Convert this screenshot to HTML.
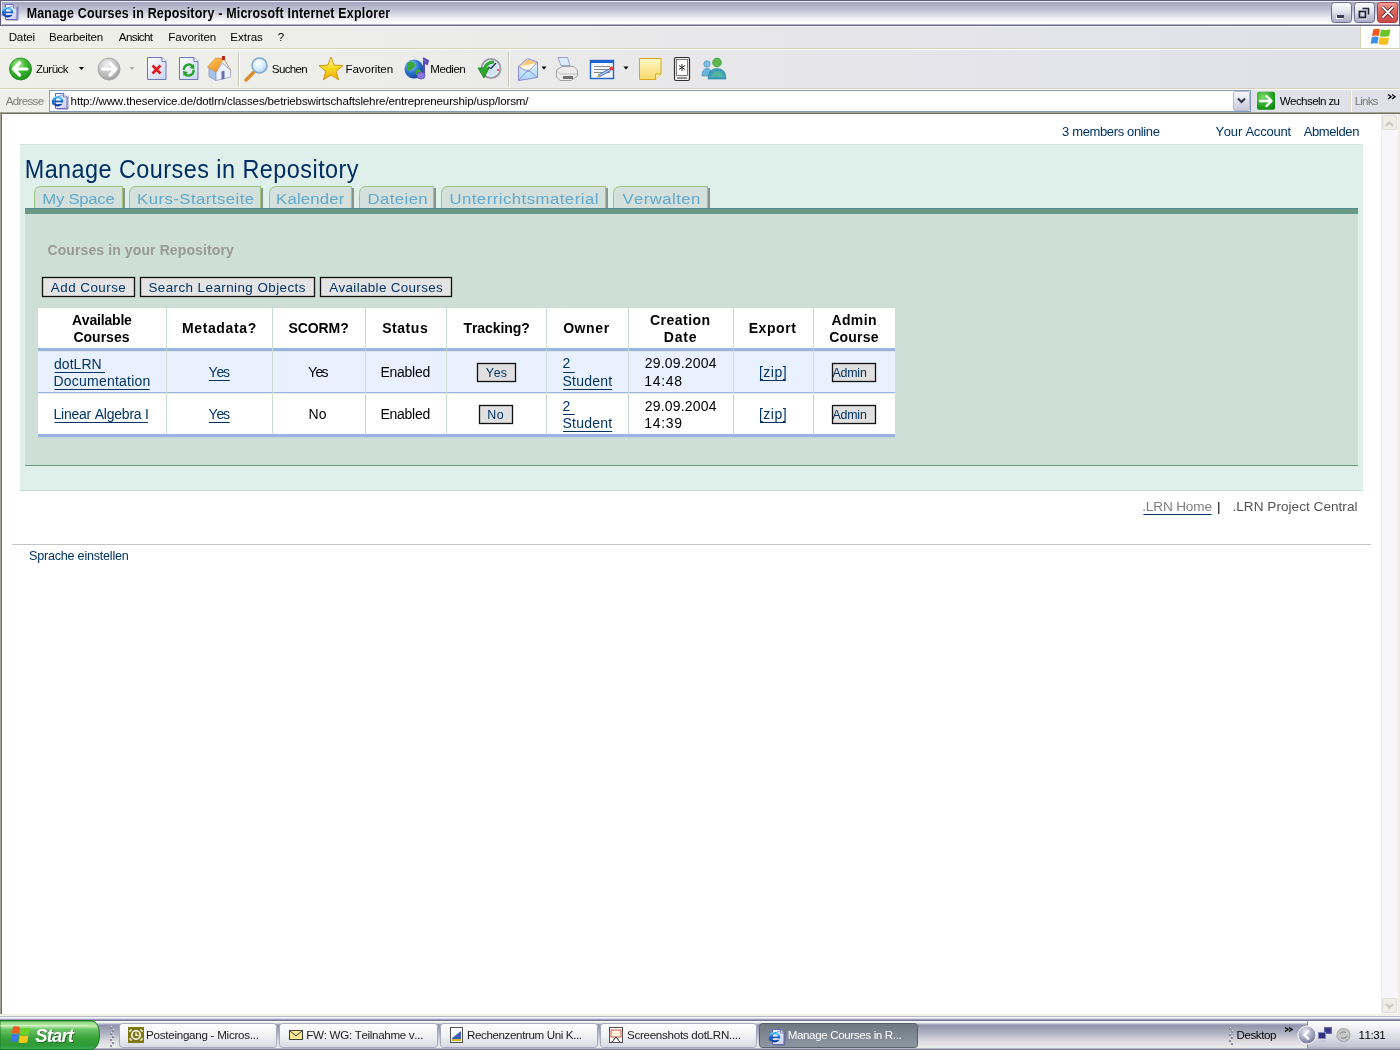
<!DOCTYPE html>
<html><head><meta charset="utf-8"><title>Manage Courses in Repository - Microsoft Internet Explorer</title>
<style>
html,body{margin:0;padding:0;width:1400px;height:1050px;overflow:hidden;background:#ffffff;}
svg{position:absolute;left:0;top:0;display:block;will-change:transform;}
text{font-family:"Liberation Sans",sans-serif;font-kerning:none;}
</style></head><body>
<svg width="1400" height="1050" viewBox="0 0 1400 1050">
<defs>
<linearGradient id="gpage" x1="0" y1="0" x2="1" y2="1"><stop offset="0" stop-color="#ffffff"/><stop offset="1" stop-color="#c8ccf4"/></linearGradient>
<linearGradient id="gie" x1="0" y1="0" x2="0" y2="1"><stop offset="0" stop-color="#5cd4fc"/><stop offset="0.5" stop-color="#1c7ce8"/><stop offset="1" stop-color="#0c3c9c"/></linearGradient>
<g id="ieicon">
<path d="M8.5 20 H20 V6.5" fill="none" stroke="#58587a" stroke-width="1" opacity="0.7"/>
<path d="M7.5 4.5 H15.5 L19 8 V19.5 H7.5 Z" fill="url(#gpage)" stroke="#6468b8" stroke-width="1"/>
<path d="M15.5 4.5 V8 H19" fill="#e8ecfc" stroke="#6468b8" stroke-width="0.8"/>
<ellipse cx="9.6" cy="12.3" rx="4.6" ry="4.1" fill="none" stroke="url(#gie)" stroke-width="2.3"/>
<rect x="5" y="11.6" width="9.5" height="1.7" fill="#0e58c0"/>
<rect x="10.2" y="13.5" width="5" height="1.2" fill="#f0f2fc"/>
<path d="M4.2 15.5 Q3.5 10 14.5 6.2" fill="none" stroke="#1a4cb0" stroke-width="0.9" stroke-dasharray="1.2 0.8"/>
</g>
<linearGradient id="tbtn" x1="0" y1="0" x2="0" y2="1">
<stop offset="0" stop-color="#fdfdff"/><stop offset="0.45" stop-color="#e4e4ee"/><stop offset="1" stop-color="#a8a8c2"/></linearGradient>
<linearGradient id="tbtnr" x1="0" y1="0" x2="0" y2="1">
<stop offset="0" stop-color="#f0a8a0"/><stop offset="0.35" stop-color="#e06a64"/><stop offset="1" stop-color="#c84848"/></linearGradient>
<linearGradient id="rebar" x1="0" y1="0" x2="1400" y2="0" gradientUnits="userSpaceOnUse">
<stop offset="0" stop-color="#f0f0ea"/><stop offset="0.35" stop-color="#ebebea"/><stop offset="0.7" stop-color="#e4e4ea"/><stop offset="1" stop-color="#e0e0e9"/></linearGradient>
<radialGradient id="gback" cx="0.4" cy="0.3" r="0.8">
<stop offset="0" stop-color="#b8f0a0"/><stop offset="0.45" stop-color="#3cb830"/><stop offset="1" stop-color="#178a1a"/></radialGradient>
<radialGradient id="gfwd" cx="0.4" cy="0.3" r="0.8">
<stop offset="0" stop-color="#f0f0f0"/><stop offset="0.5" stop-color="#c4c4c4"/><stop offset="1" stop-color="#9a9a9a"/></radialGradient>
<linearGradient id="gdoc" x1="0" y1="0" x2="1" y2="1">
<stop offset="0" stop-color="#ffffff"/><stop offset="1" stop-color="#c8d4f0"/></linearGradient>
<radialGradient id="glens" cx="0.4" cy="0.35" r="0.7">
<stop offset="0" stop-color="#ffffff"/><stop offset="0.6" stop-color="#d4ecfa"/><stop offset="1" stop-color="#a0c8e8"/></radialGradient>
<linearGradient id="gstar" x1="0" y1="0" x2="0" y2="1">
<stop offset="0" stop-color="#fff8b0"/><stop offset="0.5" stop-color="#fad81c"/><stop offset="1" stop-color="#e8a808"/></linearGradient>
<radialGradient id="gglobe" cx="0.35" cy="0.3" r="0.8">
<stop offset="0" stop-color="#9adcf8"/><stop offset="0.5" stop-color="#2a74d0"/><stop offset="1" stop-color="#123c90"/></radialGradient>
<linearGradient id="gnote" x1="0" y1="0" x2="0" y2="1">
<stop offset="0" stop-color="#fff8c8"/><stop offset="1" stop-color="#f8d868"/></linearGradient>
<radialGradient id="ggo" cx="0.35" cy="0.3" r="0.9">
<stop offset="0" stop-color="#7ede70"/><stop offset="0.6" stop-color="#20a020"/><stop offset="1" stop-color="#0c7a10"/></radialGradient>
<linearGradient id="groof" x1="0" y1="0" x2="1" y2="1"><stop offset="0" stop-color="#fcc860"/><stop offset="1" stop-color="#f08a18"/></linearGradient>
<linearGradient id="genv" x1="0" y1="0" x2="0" y2="1"><stop offset="0" stop-color="#e4f4fc"/><stop offset="1" stop-color="#a8d8f8"/></linearGradient><linearGradient id="gflap" x1="0" y1="0" x2="0" y2="1"><stop offset="0" stop-color="#f8b860"/><stop offset="1" stop-color="#fce8b0"/></linearGradient>
<linearGradient id="gdd" x1="0" y1="0" x2="0" y2="1">
<stop offset="0" stop-color="#f8f8fc"/><stop offset="1" stop-color="#c8c8da"/></linearGradient>
<linearGradient id="gtray" x1="0" y1="0" x2="0" y2="1">
<stop offset="0" stop-color="#ffffff"/><stop offset="0.15" stop-color="#f6f6fa"/><stop offset="0.6" stop-color="#dcdce6"/><stop offset="0.9" stop-color="#c4c4d4"/><stop offset="1" stop-color="#a8a8bc"/></linearGradient>
<linearGradient id="gstart" x1="0" y1="0" x2="0" y2="1">
<stop offset="0" stop-color="#3c9c3c"/><stop offset="0.08" stop-color="#9ce08c"/><stop offset="0.2" stop-color="#bcecae"/><stop offset="0.3" stop-color="#6cc468"/>
<stop offset="0.6" stop-color="#3aa43c"/><stop offset="0.85" stop-color="#2e9a36"/><stop offset="1" stop-color="#3aae5a"/></linearGradient>
<linearGradient id="ggrip" x1="0" y1="0" x2="1" y2="0">
<stop offset="0" stop-color="#a0a0b8"/><stop offset="0.5" stop-color="#c8c8d8"/><stop offset="1" stop-color="#b4b4c8"/></linearGradient>
<linearGradient id="gtask" x1="0" y1="0" x2="0" y2="1">
<stop offset="0" stop-color="#ffffff"/><stop offset="0.5" stop-color="#f2f2f6"/><stop offset="1" stop-color="#d8d8e4"/></linearGradient>
<linearGradient id="gtaska" x1="0" y1="0" x2="0" y2="1">
<stop offset="0" stop-color="#6e7882"/><stop offset="1" stop-color="#8e98a2"/></linearGradient>
<radialGradient id="gchev" cx="0.4" cy="0.3" r="0.8">
<stop offset="0" stop-color="#e8e8f4"/><stop offset="0.6" stop-color="#9a9ab8"/><stop offset="1" stop-color="#6a6a90"/></radialGradient>
</defs>
<rect x="0" y="0" width="1400" height="1" fill="#5e5d7c" />
<rect x="0" y="1" width="1400" height="1" fill="#eeeef6" />
<rect x="0" y="2" width="1400" height="1" fill="#a9a9c3" />
<rect x="0" y="3" width="1400" height="1" fill="#abaac5" />
<rect x="0" y="4" width="1400" height="1" fill="#aeaec7" />
<rect x="0" y="5" width="1400" height="1" fill="#b1b1c9" />
<rect x="0" y="6" width="1400" height="1" fill="#b4b4cb" />
<rect x="0" y="7" width="1400" height="1" fill="#b8b8ce" />
<rect x="0" y="8" width="1400" height="1" fill="#bcbcd1" />
<rect x="0" y="9" width="1400" height="1" fill="#c0c0d4" />
<rect x="0" y="10" width="1400" height="1" fill="#c4c5d7" />
<rect x="0" y="11" width="1400" height="1" fill="#c9c9da" />
<rect x="0" y="12" width="1400" height="1" fill="#cdcedd" />
<rect x="0" y="13" width="1400" height="1" fill="#d3d3e1" />
<rect x="0" y="14" width="1400" height="1" fill="#d9d9e5" />
<rect x="0" y="15" width="1400" height="1" fill="#dfdfe9" />
<rect x="0" y="16" width="1400" height="1" fill="#e5e5ed" />
<rect x="0" y="17" width="1400" height="1" fill="#eaeaf1" />
<rect x="0" y="18" width="1400" height="1" fill="#eeeef4" />
<rect x="0" y="19" width="1400" height="1" fill="#f2f2f6" />
<rect x="0" y="20" width="1400" height="1" fill="#f5f5f8" />
<rect x="0" y="21" width="1400" height="1" fill="#f9f9fb" />
<rect x="0" y="22" width="1400" height="1" fill="#ffffff" />
<rect x="0" y="23" width="1400" height="1" fill="#fbfbfd" />
<rect x="0" y="24" width="1400" height="1" fill="#b4b4c6" />
<rect x="0" y="25" width="1400" height="1" fill="#6c6b8a" />
<rect x="0" y="0" width="1" height="26" fill="#5e5d7c" />
<rect x="1" y="1" width="1" height="24" fill="#eeeef6" />
<rect x="1399" y="0" width="1" height="26" fill="#5e5d7c" />
<use href="#ieicon" transform="translate(-2,0)"/>
<g transform="translate(1,1)">
<text x="26.55" y="18" font-size="14.2" fill="#e4e4ee" font-weight="bold" font-style="normal" textLength="413.10" lengthAdjust="spacing" transform="translate(27.50,0) scale(0.88,1) translate(-27.50,0)" >Manage Courses in Repository - Microsoft Internet Explorer</text>
</g>
<text x="26.55" y="18" font-size="14.2" fill="#000" font-weight="bold" font-style="normal" textLength="413.10" lengthAdjust="spacing" transform="translate(27.50,0) scale(0.88,1) translate(-27.50,0)" >Manage Courses in Repository - Microsoft Internet Explorer</text>
<rect x="1331.5" y="2.5" width="20" height="20" rx="3" ry="3" fill="url(#tbtn)" stroke="#6e6d8e" stroke-width="1"/>
<rect x="1354.5" y="2.5" width="20" height="20" rx="3" ry="3" fill="url(#tbtn)" stroke="#6e6d8e" stroke-width="1"/>
<rect x="1336" y="16" width="7" height="3" fill="#ffffff" />
<rect x="1337" y="15" width="7" height="3" fill="#3c3b5c" />
<path d="M1362.5 8.5 H1368.5 V14.5" fill="none" stroke="#22223a" stroke-width="1.6"/>
<rect x="1359.5" y="11.5" width="6" height="6" fill="none" stroke="#ffffff" stroke-width="2" transform="translate(0.5,0.8)"/>
<rect x="1359.5" y="11.5" width="6" height="6" fill="none" stroke="#22223a" stroke-width="1.8"/>
<rect x="1377.5" y="2.5" width="20" height="20" rx="3" ry="3" fill="url(#tbtnr)" stroke="#b03c40" stroke-width="1"/>
<path d="M1382.5 7 L1393 17.5 M1393 7 L1382.5 17.5" stroke="#40181a" stroke-width="3.2"/>
<path d="M1382.5 7 L1393 17.5 M1393 7 L1382.5 17.5" stroke="#ffffff" stroke-width="1.8"/>
<rect x="0" y="26" width="1400" height="88" fill="url(#rebar)" />
<rect x="1" y="26" width="1360" height="1" fill="#f4f4f6" />
<rect x="0" y="48" width="1400" height="1" fill="#d6d0b8" />
<rect x="0" y="49" width="1400" height="1" fill="#ffffff" />
<rect x="0" y="88" width="1400" height="1" fill="#d6d0b8" />
<rect x="0" y="89" width="1400" height="1" fill="#ffffff" />
<rect x="1361" y="26" width="38" height="22" fill="#ffffff" />
<rect x="1360" y="26" width="1" height="23" fill="#d6d0b8" />
<g transform="translate(1371,28)">
<path d="M2.2 1.5 Q5 0 9 1.2 L7.8 8 Q4.5 6.8 1 8.2 Z" fill="#f05a1e"/>
<path d="M10 1.5 Q14 2.6 19.5 1.2 L18.2 8.3 Q13 9.3 8.8 8.2 Z" fill="#6cc428"/>
<path d="M0.8 9.2 Q4.3 8 7.6 9 L6.4 15.8 Q3 14.6 -0.4 16 Z" fill="#3c90e8"/>
<path d="M8.6 9.3 Q13 10.3 18 9.4 L16.8 16.5 Q11.5 17.4 7.4 16 Z" fill="#f8c01c"/>
</g>
<text x="8.65" y="41" font-size="11.6" fill="#000" font-weight="normal" font-style="normal" textLength="26.43" lengthAdjust="spacing" >Datei</text>
<text x="49.05" y="41" font-size="11.6" fill="#000" font-weight="normal" font-style="normal" textLength="54.20" lengthAdjust="spacing" >Bearbeiten</text>
<text x="118.78" y="41" font-size="11.6" fill="#000" font-weight="normal" font-style="normal" textLength="34.31" lengthAdjust="spacing" >Ansicht</text>
<text x="168.25" y="41" font-size="11.6" fill="#000" font-weight="normal" font-style="normal" textLength="48.00" lengthAdjust="spacing" >Favoriten</text>
<text x="230.25" y="41" font-size="11.6" fill="#000" font-weight="normal" font-style="normal" textLength="32.67" lengthAdjust="spacing" >Extras</text>
<text x="277.72" y="41" font-size="11.6" fill="#000" font-weight="normal" font-style="normal" textLength="6.01" lengthAdjust="spacing" >?</text>
<circle cx="20.5" cy="69" r="11" fill="url(#gback)" stroke="#1d8a1e" stroke-width="0.8"/>
<path d="M13.5 69 L19.5 63 M13.5 69 L19.5 75 M13.5 69 H27" stroke="#ffffff" stroke-width="3.2" stroke-linecap="round" stroke-linejoin="round" fill="none"/>
<text x="35.93" y="73" font-size="11.6" fill="#000" font-weight="normal" font-style="normal" textLength="32.65" lengthAdjust="spacing" >Zurück</text>
<path d="M79 67 H84 L81.5 70 Z" fill="#000"/>
<circle cx="109" cy="69" r="11" fill="url(#gfwd)" stroke="#a0a0a0" stroke-width="0.8"/>
<path d="M116 69 L110 63 M116 69 L110 75 M116 69 H102.5" stroke="#ffffff" stroke-width="3.2" stroke-linecap="round" stroke-linejoin="round" fill="none"/>
<path d="M129.5 67 H134.5 L132 70 Z" fill="#a8a8a8"/>
<path d="M147.5 57.5 H162 L166 61.5 V79.5 H147.5 Z" fill="url(#gdoc)" stroke="#6a7ab8" stroke-width="1"/>
<path d="M162 57.5 V61.5 H166" fill="#ffffff" stroke="#6a7ab8" stroke-width="1"/>
<path d="M152.5 65.5 L160.5 73.5 M160.5 65.5 L152.5 73.5" stroke="#e01818" stroke-width="2.6"/>
<path d="M179.5 57.5 H194 L198 61.5 V79.5 H179.5 Z" fill="url(#gdoc)" stroke="#6a7ab8" stroke-width="1"/>
<path d="M194 57.5 V61.5 H198" fill="#ffffff" stroke="#6a7ab8" stroke-width="1"/>
<path d="M184 70 A5 5 0 0 1 193 66.5" fill="none" stroke="#20a428" stroke-width="2.4"/>
<path d="M194 64 L194.5 69 L189.5 68 Z" fill="#20a428"/>
<path d="M193.5 70 A5 5 0 0 1 184.5 73.5" fill="none" stroke="#20a428" stroke-width="2.4"/>
<path d="M183.5 76 L183 71 L188 72 Z" fill="#20a428"/>
<path d="M209 67 L216 72 L216 80.5 L209 76.5 Z" fill="#a4c4ec" stroke="#8a9cc8" stroke-width="0.8"/>
<path d="M216 72 L222.5 63 L230.5 70.5 L230.5 77 L216 80.5 Z" fill="#eef2fc" stroke="#8a9cc8" stroke-width="0.8"/>
<path d="M207.5 67 L215.5 58 L223.5 58.5 L216 72 Z" fill="url(#groof)" stroke="#e08828" stroke-width="0.6"/>
<path d="M223.5 58.5 L231 70.5" stroke="#c89870" stroke-width="1"/>
<path d="M221.5 71.5 L224.5 70.5 L224.5 79 L221.5 79.6 Z" fill="#6870a8"/>
<rect x="222" y="56" width="3" height="4" fill="#b82818" />
<rect x="238" y="52" width="1" height="35" fill="#c8c6b8" />
<rect x="239" y="52" width="1" height="35" fill="#ffffff" />
<path d="M246 80 L253.5 72.5" stroke="#e08a30" stroke-width="3.4" stroke-linecap="round"/>
<circle cx="259.5" cy="65.5" r="7.5" fill="url(#glens)" stroke="#7ea6d0" stroke-width="1.6"/>
<text x="271.87" y="73" font-size="11.6" fill="#000" font-weight="normal" font-style="normal" textLength="35.88" lengthAdjust="spacing" >Suchen</text>
<path d="M331 57 L334.2 65.2 L343 65.6 L336.2 71.2 L338.6 79.8 L331 75 L323.4 79.8 L325.8 71.2 L319 65.6 L327.8 65.2 Z" fill="url(#gstar)" stroke="#d09810" stroke-width="1" stroke-linejoin="round"/>
<text x="345.45" y="73" font-size="11.6" fill="#000" font-weight="normal" font-style="normal" textLength="47.70" lengthAdjust="spacing" >Favoriten</text>
<circle cx="414" cy="69" r="9.5" fill="url(#gglobe)"/>
<path d="M407 63 Q411 60 414 63 Q417 66 412 69 Q409 72 407 70 Z M416 70 Q420 68 422 72 Q419 76 416 75 Z" fill="#3ca838"/>
<path d="M423 58 L428 61 L427 64 L424 62 V75" fill="#7a6ad0" stroke="#5a4ab8" stroke-width="2"/>
<ellipse cx="421" cy="75.5" rx="4" ry="3.5" fill="#8878e0" stroke="#5a4ab8" stroke-width="0.8"/>
<text x="430.35" y="73" font-size="11.6" fill="#000" font-weight="normal" font-style="normal" textLength="35.40" lengthAdjust="spacing" >Medien</text>
<circle cx="491" cy="68.5" r="9.5" fill="#e8f0f8" stroke="#9c9ca4" stroke-width="2"/>
<circle cx="491" cy="68.5" r="7" fill="#cfe3f4"/>
<path d="M491 68.5 L496 63 M491 68.5 L488 67" stroke="#20304a" stroke-width="1.2"/>
<circle cx="498" cy="70" r="1" fill="#e03030"/>
<path d="M478 68 L484 78 L489 68 Z" fill="#2ca82c" stroke="#108010" stroke-width="0.8"/>
<path d="M484 70 Q486 62 494 62" fill="none" stroke="#2ca82c" stroke-width="3"/>
<rect x="508" y="52" width="1" height="35" fill="#c8c6b8" />
<rect x="509" y="52" width="1" height="35" fill="#ffffff" />
<path d="M518.5 66.5 L527.5 58.5 L537.5 62 V77.5 L518.5 80.5 Z" fill="url(#genv)" stroke="#8c88d8" stroke-width="1"/>
<path d="M520 66 L527.5 59.5 L536.5 62.5 L536 66 L528 70 L521 68.5 Z" fill="url(#gflap)"/>
<path d="M521.5 66 L535.5 63.5 L535.5 67 L528 69 L522 68.5 Z" fill="#fffaf0"/>
<path d="M518.5 80.5 L528 70 L537.5 77.5 M518.5 66.5 L528 72 L537.5 62" fill="none" stroke="#8c88d8" stroke-width="0.9"/>
<path d="M541.5 66.5 H546.5 L544 69.5 Z" fill="#000"/>
<path d="M558 57.5 H567.5 L570 65.5 H561 Z" fill="#dcecfc" stroke="#8a90c8" stroke-width="0.8"/>
<path d="M556.5 70 L562 66.5 H574 L577.5 70 V76 L571 80.5 H560 L556.5 77 Z" fill="#ececec" stroke="#9a9a9a" stroke-width="0.9"/>
<path d="M556.5 70.5 L560.5 74 H577" fill="none" stroke="#b4b4b4" stroke-width="0.8"/>
<rect x="563" y="76" width="10" height="3" fill="#707070" />
<rect x="590.5" y="60.5" width="23" height="18" fill="#f4f8fe" stroke="#1c64d0" stroke-width="1.4"/>
<rect x="591" y="61" width="22" height="2" fill="#1c64d0" />
<rect x="594" y="66" width="16" height="1" fill="#8c8c8c" />
<rect x="594" y="69" width="16" height="1" fill="#8c8c8c" />
<rect x="594" y="72" width="16" height="1" fill="#8c8c8c" />
<path d="M598.5 76 L610.5 69.5" stroke="#3a72d8" stroke-width="2.8"/>
<path d="M598.5 76 L610.5 69.5" stroke="#f4f8ff" stroke-width="0.9"/>
<path d="M596.5 77.2 L599.5 74 L600.5 76.5 Z" fill="#e0a030"/>
<circle cx="611.5" cy="68.5" r="1.9" fill="#e04030"/>
<path d="M623.5 66.5 H628.5 L626 69.5 Z" fill="#000"/>
<path d="M639.5 58.5 H661 V74 L655.5 79.5 H639.5 Z" fill="url(#gnote)" stroke="#d8a820" stroke-width="1"/>
<path d="M655.5 79.5 V74 H661" fill="#fff0b0" stroke="#d8a820" stroke-width="1"/>
<rect x="674.5" y="57.5" width="15" height="23" rx="1.5" fill="#f0f0f0" stroke="#303030" stroke-width="1.2"/>
<rect x="677" y="60" width="10" height="15" fill="#ffffff" />
<rect x="676.5" y="59.5" width="11" height="16" fill="none" stroke="#606060" stroke-width="0.8"/>
<path d="M682 64 V71 M679 65.5 L685 69.5 M685 65.5 L679 69.5" stroke="#303030" stroke-width="1"/>
<rect x="677" y="77" width="10" height="2" fill="#909090" />
<circle cx="707" cy="64" r="3.2" fill="#7cc0e0" stroke="#3a88b8" stroke-width="0.6"/><path d="M702 76 Q702 68.5 707 68.5 Q712 68.5 712 76 Z" fill="#6ab4dc" stroke="#3a88b8" stroke-width="0.6"/>
<circle cx="717" cy="62.5" r="4.4" fill="#5cb84a" stroke="#2e8a3a" stroke-width="0.6"/><path d="M708 79 Q708 68.5 717 68.5 Q726 68.5 726 79 Z" fill="#3aa0c0" stroke="#2a7890" stroke-width="0.6"/>
<path d="M711 77 Q713 71 717 71 Q722 71 724 77 Z" fill="#60b890" opacity="0.7"/>
<text x="5.68" y="105" font-size="11.6" fill="#7c7c74" font-weight="normal" font-style="normal" textLength="38.44" lengthAdjust="spacing" >Adresse</text>
<rect x="49.5" y="90.5" width="1201" height="21" fill="#ffffff" stroke="#7f9db9" stroke-width="1"/>
<use href="#ieicon" transform="translate(48,89)"/>
<text x="70.60" y="105" font-size="11.6" fill="#000" font-weight="normal" font-style="normal" textLength="457.90" lengthAdjust="spacing" >http://www.theservice.de/dotlrn/classes/betriebswirtschaftslehre/entrepreneurship/usp/lorsm/</text>
<rect x="1233.5" y="91.5" width="16" height="19" rx="1.5" fill="url(#gdd)" stroke="#b8bcd0" stroke-width="1"/>
<path d="M1238 98.5 L1241.5 102 L1245 98.5" fill="none" stroke="#303040" stroke-width="2"/>
<rect x="1257" y="91.8" width="18" height="18" rx="2" fill="url(#ggo)"/>
<path d="M1260 101 H1271 M1266.5 96 L1271.5 101 L1266.5 106" stroke="#ffffff" stroke-width="2.4" fill="none" stroke-linecap="round" stroke-linejoin="round"/>
<text x="1279.75" y="105" font-size="11.6" fill="#000" font-weight="normal" font-style="normal" textLength="60.32" lengthAdjust="spacing" >Wechseln zu</text>
<rect x="1350" y="90" width="1" height="22" fill="#d8d4c0" />
<rect x="1351" y="90" width="1" height="22" fill="#ffffff" />
<text x="1354.65" y="105" font-size="11.6" fill="#7c7c74" font-weight="normal" font-style="normal" textLength="23.77" lengthAdjust="spacing" >Links</text>
<path d="M1388 94.5 L1391 96.8 L1388 99 M1392 94.5 L1395 96.8 L1392 99" fill="none" stroke="#000" stroke-width="1.3"/>
<rect x="0" y="112" width="1400" height="1" fill="#a5a293" />
<rect x="0" y="113" width="1400" height="1" fill="#716f64" />
<rect x="0" y="112" width="1" height="903" fill="#a5a293" />
<rect x="1" y="113" width="1" height="902" fill="#716f64" />
<rect x="2" y="114" width="1380" height="900" fill="#ffffff" />
<rect x="1381" y="114" width="17" height="900" fill="#f7f7fb" />
<rect x="1381" y="114" width="1" height="900" fill="#ebebf0" />
<rect x="1398" y="114" width="2" height="900" fill="#eeeee4" />
<rect x="1382.5" y="115.5" width="14" height="14" rx="1.5" fill="#eeeee6" stroke="#e0e0d8" stroke-width="1"/>
<rect x="1382.5" y="998.5" width="14" height="14" rx="1.5" fill="#eeeee6" stroke="#e0e0d8" stroke-width="1"/>
<path d="M1386 126 L1389.5 122.5 L1393 126" fill="none" stroke="#c9c9c2" stroke-width="2"/>
<path d="M1386 1004 L1389.5 1007.5 L1393 1004" fill="none" stroke="#c9c9c2" stroke-width="2"/>
<text x="1062.10" y="136" font-size="13" fill="#003366" font-weight="normal" font-style="normal" textLength="97.77" lengthAdjust="spacing" >3 members online</text>
<text x="1215.41" y="136" font-size="13" fill="#003366" font-weight="normal" font-style="normal" textLength="75.68" lengthAdjust="spacing" >Your Account</text>
<text x="1303.67" y="136" font-size="13" fill="#003366" font-weight="normal" font-style="normal" textLength="55.77" lengthAdjust="spacing" >Abmelden</text>
<rect x="20" y="144" width="1343" height="347" fill="#dff0eb" />
<rect x="20" y="144" width="1343" height="1" fill="#d2e6de" />
<rect x="20" y="490" width="1343" height="1" fill="#c9dbd2" />
<text x="24.47" y="178" font-size="26" fill="#002d62" font-weight="normal" font-style="normal" textLength="370.96" lengthAdjust="spacing" transform="translate(26.60,0) scale(0.9,1) translate(-26.60,0)" >Manage Courses in Repository</text>
<rect x="123" y="188" width="2" height="21" fill="#8a948a" />
<path d="M34.5 208.5 V193.5 Q34.5 186.5 41.5 186.5 H122.5 V208.5" fill="#d4e0dc" stroke="#9cc47c" stroke-width="1"/>
<text x="42.43" y="204" font-size="15.5" fill="#62a8cc" font-weight="normal" font-style="normal" textLength="67.05" lengthAdjust="spacing" transform="translate(43.70,0) scale(1.08,1) translate(-43.70,0)" >My Space</text>
<rect x="261" y="188" width="2" height="21" fill="#8a948a" />
<path d="M129.5 208.5 V193.5 Q129.5 186.5 136.5 186.5 H260.5 V208.5" fill="#d4e0dc" stroke="#9cc47c" stroke-width="1"/>
<text x="137.13" y="204" font-size="15.5" fill="#62a8cc" font-weight="normal" font-style="normal" textLength="108.35" lengthAdjust="spacing" transform="translate(138.40,0) scale(1.08,1) translate(-138.40,0)" >Kurs-Startseite</text>
<rect x="352" y="188" width="2" height="21" fill="#8a948a" />
<path d="M269.5 208.5 V193.5 Q269.5 186.5 276.5 186.5 H351.5 V208.5" fill="#d4e0dc" stroke="#9cc47c" stroke-width="1"/>
<text x="276.23" y="204" font-size="15.5" fill="#62a8cc" font-weight="normal" font-style="normal" textLength="63.10" lengthAdjust="spacing" transform="translate(277.50,0) scale(1.08,1) translate(-277.50,0)" >Kalender</text>
<rect x="434" y="188" width="2" height="21" fill="#8a948a" />
<path d="M359.5 208.5 V193.5 Q359.5 186.5 366.5 186.5 H433.5 V208.5" fill="#d4e0dc" stroke="#9cc47c" stroke-width="1"/>
<text x="367.53" y="204" font-size="15.5" fill="#62a8cc" font-weight="normal" font-style="normal" textLength="55.80" lengthAdjust="spacing" transform="translate(368.80,0) scale(1.08,1) translate(-368.80,0)" >Dateien</text>
<rect x="606" y="188" width="2" height="21" fill="#8a948a" />
<path d="M441.5 208.5 V193.5 Q441.5 186.5 448.5 186.5 H605.5 V208.5" fill="#d4e0dc" stroke="#9cc47c" stroke-width="1"/>
<text x="449.50" y="204" font-size="15.5" fill="#62a8cc" font-weight="normal" font-style="normal" textLength="137.97" lengthAdjust="spacing" transform="translate(450.70,0) scale(1.08,1) translate(-450.70,0)" >Unterrichtsmaterial</text>
<rect x="708" y="188" width="2" height="21" fill="#8a948a" />
<path d="M613.5 208.5 V193.5 Q613.5 186.5 620.5 186.5 H707.5 V208.5" fill="#d4e0dc" stroke="#9cc47c" stroke-width="1"/>
<text x="622.43" y="204" font-size="15.5" fill="#62a8cc" font-weight="normal" font-style="normal" textLength="72.09" lengthAdjust="spacing" transform="translate(622.50,0) scale(1.08,1) translate(-622.50,0)" >Verwalten</text>
<rect x="25" y="208" width="1333" height="6" fill="#6b9a84" />
<rect x="25" y="208" width="1333" height="1" fill="#4f8e92" />
<rect x="25" y="214" width="1333" height="252" fill="#cddfd7" />
<rect x="25" y="465" width="1333" height="1" fill="#6b9a84" />
<text x="47.43" y="255" font-size="14" fill="#999999" font-weight="bold" font-style="normal" textLength="186.35" lengthAdjust="spacing" >Courses in your Repository</text>
<rect x="42.5" y="277.5" width="92" height="19" fill="#e4e4e4" stroke="#111111" stroke-width="1.3"/>
<text x="50.87" y="292" font-size="13.4" fill="#003366" font-weight="normal" font-style="normal" textLength="74.92" lengthAdjust="spacing" >Add Course</text>
<rect x="140.5" y="277.5" width="174" height="19" fill="#e4e4e4" stroke="#111111" stroke-width="1.3"/>
<text x="148.39" y="292" font-size="13.4" fill="#003366" font-weight="normal" font-style="normal" textLength="157.09" lengthAdjust="spacing" >Search Learning Objects</text>
<rect x="320.5" y="277.5" width="131" height="19" fill="#e4e4e4" stroke="#111111" stroke-width="1.3"/>
<text x="329.27" y="292" font-size="13.4" fill="#003366" font-weight="normal" font-style="normal" textLength="113.41" lengthAdjust="spacing" >Available Courses</text>
<rect x="38" y="308" width="857" height="40" fill="#ffffff" />
<rect x="38" y="348" width="857" height="3" fill="#98b4e4" />
<rect x="38" y="351" width="857" height="41" fill="#e9f1fe" />
<rect x="38" y="351" width="857" height="1" fill="#dce8e0" />
<rect x="38" y="392" width="857" height="1" fill="#98b4e4" />
<rect x="38" y="393" width="857" height="41" fill="#ffffff" />
<rect x="38" y="393" width="857" height="1" fill="#e4ece4" />
<rect x="38" y="434" width="857" height="3" fill="#98b4e4" />
<rect x="38" y="437" width="857" height="1" fill="#c4d8cc" />
<rect x="166" y="308" width="1" height="126" fill="#c8dcd4" />
<rect x="272" y="308" width="1" height="126" fill="#c8dcd4" />
<rect x="365" y="308" width="1" height="126" fill="#c8dcd4" />
<rect x="446" y="308" width="1" height="126" fill="#c8dcd4" />
<rect x="546" y="308" width="1" height="126" fill="#c8dcd4" />
<rect x="628" y="308" width="1" height="126" fill="#c8dcd4" />
<rect x="733" y="308" width="1" height="126" fill="#c8dcd4" />
<rect x="813" y="308" width="1" height="126" fill="#c8dcd4" />
<text x="71.95" y="325" font-size="14" fill="#000" font-weight="bold" font-style="normal" textLength="59.93" lengthAdjust="spacing" >Available</text>
<text x="73.43" y="341.5" font-size="14" fill="#000" font-weight="bold" font-style="normal" textLength="56.05" lengthAdjust="spacing" >Courses</text>
<text x="181.96" y="333" font-size="14" fill="#000" font-weight="bold" font-style="normal" textLength="74.24" lengthAdjust="spacing" >Metadata?</text>
<text x="288.50" y="333" font-size="14" fill="#000" font-weight="bold" font-style="normal" textLength="60.21" lengthAdjust="spacing" >SCORM?</text>
<text x="382.20" y="333" font-size="14" fill="#000" font-weight="bold" font-style="normal" textLength="45.48" lengthAdjust="spacing" >Status</text>
<text x="463.44" y="333" font-size="14" fill="#000" font-weight="bold" font-style="normal" textLength="66.26" lengthAdjust="spacing" >Tracking?</text>
<text x="563.13" y="333" font-size="14" fill="#000" font-weight="bold" font-style="normal" textLength="45.99" lengthAdjust="spacing" >Owner</text>
<text x="650.03" y="325" font-size="14" fill="#000" font-weight="bold" font-style="normal" textLength="60.04" lengthAdjust="spacing" >Creation</text>
<text x="663.76" y="341.5" font-size="14" fill="#000" font-weight="bold" font-style="normal" textLength="32.82" lengthAdjust="spacing" >Date</text>
<text x="748.66" y="333" font-size="14" fill="#000" font-weight="bold" font-style="normal" textLength="47.31" lengthAdjust="spacing" >Export</text>
<text x="831.45" y="325" font-size="14" fill="#000" font-weight="bold" font-style="normal" textLength="45.02" lengthAdjust="spacing" >Admin</text>
<text x="829.23" y="341.5" font-size="14" fill="#000" font-weight="bold" font-style="normal" textLength="49.35" lengthAdjust="spacing" >Course</text>
<text x="54.01" y="369" font-size="14" fill="#003366" font-weight="normal" font-style="normal" textLength="47.73" lengthAdjust="spacing" >dotLRN</text>
<rect x="54.6" y="372" width="50.4" height="1" fill="#003366" />
<text x="53.45" y="385.5" font-size="14" fill="#003366" font-weight="normal" font-style="normal" textLength="96.86" lengthAdjust="spacing" >Documentation</text>
<rect x="54.6" y="389" width="95.0" height="1" fill="#003366" />
<text x="208.59" y="377" font-size="14" fill="#003366" font-weight="normal" font-style="normal" textLength="21.41" lengthAdjust="spacing" >Yes</text>
<rect x="208.9" y="380" width="20.900000000000006" height="1" fill="#003366" />
<text x="307.89" y="377" font-size="14" fill="#000" font-weight="normal" font-style="normal" textLength="20.71" lengthAdjust="spacing" >Yes</text>
<text x="380.55" y="377" font-size="14" fill="#000" font-weight="normal" font-style="normal" textLength="49.65" lengthAdjust="spacing" >Enabled</text>
<text x="562.40" y="368" font-size="14" fill="#003366" font-weight="normal" font-style="normal" textLength="9.21" lengthAdjust="spacing" >2</text>
<rect x="563.1" y="372" width="11.600000000000023" height="1" fill="#003366" />
<text x="562.46" y="385.5" font-size="14" fill="#003366" font-weight="normal" font-style="normal" textLength="49.64" lengthAdjust="spacing" >Student</text>
<rect x="563.1" y="389" width="49.10000000000002" height="1" fill="#003366" />
<text x="644.70" y="368" font-size="14" fill="#000" font-weight="normal" font-style="normal" textLength="71.81" lengthAdjust="spacing" >29.09.2004</text>
<text x="644.33" y="385.5" font-size="14" fill="#000" font-weight="normal" font-style="normal" textLength="37.67" lengthAdjust="spacing" >14:48</text>
<text x="758.90" y="377" font-size="14" fill="#003366" font-weight="normal" font-style="normal" textLength="27.70" lengthAdjust="spacing" >[zip]</text>
<rect x="759.9" y="380" width="25.899999999999977" height="1" fill="#003366" />
<text x="53.45" y="419" font-size="14" fill="#003366" font-weight="normal" font-style="normal" textLength="95.54" lengthAdjust="spacing" >Linear Algebra I</text>
<rect x="54.6" y="422" width="93.30000000000001" height="1" fill="#003366" />
<text x="208.59" y="419" font-size="14" fill="#003366" font-weight="normal" font-style="normal" textLength="21.41" lengthAdjust="spacing" >Yes</text>
<rect x="208.9" y="422" width="20.900000000000006" height="1" fill="#003366" />
<text x="308.55" y="419" font-size="14" fill="#000" font-weight="normal" font-style="normal" textLength="18.04" lengthAdjust="spacing" >No</text>
<text x="380.55" y="419" font-size="14" fill="#000" font-weight="normal" font-style="normal" textLength="49.65" lengthAdjust="spacing" >Enabled</text>
<text x="562.40" y="410.5" font-size="14" fill="#003366" font-weight="normal" font-style="normal" textLength="9.21" lengthAdjust="spacing" >2</text>
<rect x="563.1" y="414" width="11.600000000000023" height="1" fill="#003366" />
<text x="562.46" y="427.5" font-size="14" fill="#003366" font-weight="normal" font-style="normal" textLength="49.64" lengthAdjust="spacing" >Student</text>
<rect x="563.1" y="431" width="49.10000000000002" height="1" fill="#003366" />
<text x="644.70" y="410.5" font-size="14" fill="#000" font-weight="normal" font-style="normal" textLength="71.81" lengthAdjust="spacing" >29.09.2004</text>
<text x="644.33" y="427.5" font-size="14" fill="#000" font-weight="normal" font-style="normal" textLength="37.73" lengthAdjust="spacing" >14:39</text>
<text x="758.90" y="419" font-size="14" fill="#003366" font-weight="normal" font-style="normal" textLength="27.70" lengthAdjust="spacing" >[zip]</text>
<rect x="759.9" y="422" width="25.899999999999977" height="1" fill="#003366" />
<rect x="477.5" y="363.5" width="38" height="18" fill="#e0e0e0" stroke="#111111" stroke-width="1.3"/>
<text x="485.73" y="377" font-size="12.4" fill="#003366" font-weight="normal" font-style="normal" textLength="21.12" lengthAdjust="spacing" >Yes</text>
<rect x="479.5" y="405.5" width="33" height="18" fill="#e0e0e0" stroke="#111111" stroke-width="1.3"/>
<text x="487.18" y="419" font-size="12.4" fill="#003366" font-weight="normal" font-style="normal" textLength="16.54" lengthAdjust="spacing" >No</text>
<rect x="832.5" y="363.5" width="43" height="18" fill="#e0e0e0" stroke="#111111" stroke-width="1.3"/>
<text x="832.58" y="377" font-size="12.4" fill="#003366" font-weight="normal" font-style="normal" textLength="34.23" lengthAdjust="spacing" >Admin</text>
<rect x="832.5" y="405.5" width="43" height="18" fill="#e0e0e0" stroke="#111111" stroke-width="1.3"/>
<text x="832.58" y="419" font-size="12.4" fill="#003366" font-weight="normal" font-style="normal" textLength="34.23" lengthAdjust="spacing" >Admin</text>
<text x="1142.16" y="511" font-size="13.6" fill="#808080" font-weight="normal" font-style="normal" textLength="69.85" lengthAdjust="spacing" >.LRN Home</text>
<rect x="1143.4" y="514" width="68.19999999999982" height="1" fill="#003366" />
<text x="1217.08" y="511" font-size="13.6" fill="#000" font-weight="normal" font-style="normal" textLength="4.13" lengthAdjust="spacing" >|</text>
<text x="1232.46" y="511" font-size="13.6" fill="#555555" font-weight="normal" font-style="normal" textLength="125.05" lengthAdjust="spacing" >.LRN Project Central</text>
<rect x="12" y="544" width="1359" height="1" fill="#c4c4c4" />
<text x="29.03" y="560" font-size="12.6" fill="#003366" font-weight="normal" font-style="normal" textLength="99.79" lengthAdjust="spacing" >Sprache einstellen</text>
<rect x="0" y="1014" width="1400" height="1" fill="#efeedf" />
<rect x="0" y="1015" width="1400" height="1" fill="#f4f4ee" />
<rect x="0" y="1016" width="1400" height="1" fill="#b8b8c8" />
<rect x="0" y="1017" width="1400" height="1" fill="#f4f6fc" />
<rect x="0" y="1018" width="1400" height="1" fill="#dadae8" />
<rect x="0" y="1019" width="1400" height="1" fill="#9c9cb8" />
<rect x="0" y="1020" width="1400" height="1" fill="#777790" />
<rect x="0" y="1021" width="1400" height="1" fill="#f4f6f8" />
<rect x="0" y="1022" width="1400" height="1" fill="#eef0f4" />
<rect x="0" y="1023" width="1400" height="1" fill="#c8c8d6" />
<rect x="0" y="1024" width="1400" height="1" fill="#a4a4bc" />
<rect x="0" y="1025" width="1400" height="1" fill="#9496ae" />
<rect x="0" y="1026" width="1400" height="1" fill="#9698b0" />
<rect x="0" y="1027" width="1400" height="1" fill="#9a9cb2" />
<rect x="0" y="1028" width="1400" height="1" fill="#9ea0b6" />
<rect x="0" y="1029" width="1400" height="1" fill="#a2a4b9" />
<rect x="0" y="1030" width="1400" height="1" fill="#a6a8bc" />
<rect x="0" y="1031" width="1400" height="1" fill="#a9acbf" />
<rect x="0" y="1032" width="1400" height="1" fill="#adb0c2" />
<rect x="0" y="1033" width="1400" height="1" fill="#b2b4c5" />
<rect x="0" y="1034" width="1400" height="1" fill="#b7b9c8" />
<rect x="0" y="1035" width="1400" height="1" fill="#bcbecb" />
<rect x="0" y="1036" width="1400" height="1" fill="#c1c3cd" />
<rect x="0" y="1037" width="1400" height="1" fill="#c7c8d1" />
<rect x="0" y="1038" width="1400" height="1" fill="#cdced5" />
<rect x="0" y="1039" width="1400" height="1" fill="#d3d3d9" />
<rect x="0" y="1040" width="1400" height="1" fill="#d8d8dc" />
<rect x="0" y="1041" width="1400" height="1" fill="#dcdbdf" />
<rect x="0" y="1042" width="1400" height="1" fill="#dfdee2" />
<rect x="0" y="1043" width="1400" height="1" fill="#e2e0e4" />
<rect x="0" y="1044" width="1400" height="1" fill="#e4e2e6" />
<rect x="0" y="1045" width="1400" height="1" fill="#e6e6e8" />
<rect x="0" y="1046" width="1400" height="1" fill="#e8eae8" />
<rect x="0" y="1047" width="1400" height="1" fill="#e8ece8" />
<rect x="0" y="1048" width="1400" height="1" fill="#b8b8c8" />
<rect x="0" y="1049" width="1400" height="1" fill="#7c7a94" />
<rect x="1307" y="1021" width="93" height="28" fill="url(#gtray)" />
<rect x="1307" y="1020" width="1" height="30" fill="#8c8ca8" />
<path d="M0 1020.5 H92 Q99.5 1023 99.5 1035 Q99.5 1047 92 1049.5 H0 Z" fill="url(#gstart)" stroke="#1a7a22" stroke-width="1"/>
<path d="M0 1025.5 H88" stroke="#e6f8e0" stroke-width="1" opacity="0.6"/>
<g transform="translate(10,1026)">
<path d="M3 0.8 Q6 -0.4 10 1 L9 7.5 Q5.5 6.5 1.8 7.6 Z" fill="#f05a1e"/>
<path d="M11 1.4 Q15 2.8 19.8 1.4 L18.6 8.2 Q13.5 9.2 10 8.2 Z" fill="#6cd428"/>
<path d="M1.6 8.6 Q5.2 7.6 8.8 8.6 L7.6 15.8 Q4 14.8 0.4 15.8 Z" fill="#3c78f0"/>
<path d="M9.8 9.2 Q14 10.4 18.4 9.2 L17.2 16.6 Q12.5 17.6 8.6 16.4 Z" fill="#f8c818"/>
</g>
<text x="35.27" y="1042" font-size="18.5" fill="#204020" font-weight="bold" font-style="italic" textLength="38.59" lengthAdjust="spacing" transform="translate(1,1)" opacity="0.6">Start</text>
<text x="35.27" y="1042" font-size="18.5" fill="#ffffff" font-weight="bold" font-style="italic" textLength="38.59" lengthAdjust="spacing" >Start</text>
<rect x="110" y="1027" width="2" height="2" fill="#8a8c9c" />
<rect x="111" y="1026" width="1" height="1" fill="#ffffff" />
<rect x="112" y="1030" width="2" height="2" fill="#8a8c9c" />
<rect x="113" y="1029" width="1" height="1" fill="#ffffff" />
<rect x="110" y="1033" width="2" height="2" fill="#8a8c9c" />
<rect x="111" y="1032" width="1" height="1" fill="#ffffff" />
<rect x="112" y="1036" width="2" height="2" fill="#8a8c9c" />
<rect x="113" y="1035" width="1" height="1" fill="#ffffff" />
<rect x="110" y="1039" width="2" height="2" fill="#8a8c9c" />
<rect x="111" y="1038" width="1" height="1" fill="#ffffff" />
<rect x="112" y="1042" width="2" height="2" fill="#8a8c9c" />
<rect x="113" y="1041" width="1" height="1" fill="#ffffff" />
<rect x="110" y="1045" width="2" height="2" fill="#8a8c9c" />
<rect x="111" y="1044" width="1" height="1" fill="#ffffff" />
<rect x="119.5" y="1023.5" width="157" height="24" rx="3" fill="url(#gtask)" stroke="#a8a8c0" stroke-width="1"/>
<text x="146.05" y="1039" font-size="11.6" fill="#202020" font-weight="normal" font-style="normal" textLength="112.91" lengthAdjust="spacing" >Posteingang - Micros...</text>
<rect x="279.5" y="1023.5" width="158" height="24" rx="3" fill="url(#gtask)" stroke="#a8a8c0" stroke-width="1"/>
<text x="306.35" y="1039" font-size="11.6" fill="#202020" font-weight="normal" font-style="normal" textLength="117.01" lengthAdjust="spacing" >FW: WG: Teilnahme v...</text>
<rect x="440.5" y="1023.5" width="157" height="24" rx="3" fill="url(#gtask)" stroke="#a8a8c0" stroke-width="1"/>
<text x="466.95" y="1039" font-size="11.6" fill="#202020" font-weight="normal" font-style="normal" textLength="115.11" lengthAdjust="spacing" >Rechenzentrum Uni K...</text>
<rect x="600.5" y="1023.5" width="156" height="24" rx="3" fill="url(#gtask)" stroke="#a8a8c0" stroke-width="1"/>
<text x="626.97" y="1039" font-size="11.6" fill="#202020" font-weight="normal" font-style="normal" textLength="114.09" lengthAdjust="spacing" >Screenshots dotLRN....</text>
<rect x="759.5" y="1023.5" width="158" height="24" rx="3" fill="url(#gtaska)" stroke="#56606a" stroke-width="1"/>
<text x="787.65" y="1039" font-size="11.6" fill="#ffffff" font-weight="normal" font-style="normal" textLength="114.11" lengthAdjust="spacing" >Manage Courses in R...</text>
<rect x="128" y="1027" width="16" height="16" fill="#7c7a10" />
<path d="M130 1030 V1032 M130 1030 H132 M142 1030 V1032 M142 1030 H140 M130 1040 V1038 M130 1040 H132 M142 1040 V1038 M142 1040 H140" stroke="#ffffff" stroke-width="1.2"/>
<circle cx="136" cy="1035" r="4.2" fill="none" stroke="#ffffff" stroke-width="1.6"/>
<path d="M136 1032.5 V1035.3 H138.5" fill="none" stroke="#ffffff" stroke-width="1.2"/>
<rect x="289.5" y="1030.5" width="13" height="9" fill="#f8e890" stroke="#404040" stroke-width="1"/>
<path d="M289.5 1030.5 L296 1036 L302.5 1030.5" fill="none" stroke="#404040" stroke-width="1"/>
<rect x="450.5" y="1027.5" width="12" height="15" fill="#ffffff" stroke="#505050" stroke-width="1"/>
<path d="M452 1038 L461 1031 V1041 H452 Z" fill="#4060c0"/>
<rect x="452" y="1039" width="9" height="2" fill="#d8b020" />
<rect x="609.5" y="1027.5" width="13" height="15" fill="#ffffff" stroke="#505050" stroke-width="1"/>
<rect x="611" y="1030" width="10" height="7" fill="#fff0e0" stroke="#c03020" stroke-width="0.8"/>
<path d="M612 1042 L616 1037 L620 1042" fill="none" stroke="#303030" stroke-width="1"/>
<use href="#ieicon" transform="translate(765,1025)"/>
<rect x="1229" y="1028" width="2" height="2" fill="#8a8c9c" />
<rect x="1230" y="1027" width="1" height="1" fill="#ffffff" />
<rect x="1231" y="1031" width="2" height="2" fill="#8a8c9c" />
<rect x="1232" y="1030" width="1" height="1" fill="#ffffff" />
<rect x="1229" y="1034" width="2" height="2" fill="#8a8c9c" />
<rect x="1230" y="1033" width="1" height="1" fill="#ffffff" />
<rect x="1231" y="1037" width="2" height="2" fill="#8a8c9c" />
<rect x="1232" y="1036" width="1" height="1" fill="#ffffff" />
<rect x="1229" y="1040" width="2" height="2" fill="#8a8c9c" />
<rect x="1230" y="1039" width="1" height="1" fill="#ffffff" />
<rect x="1231" y="1043" width="2" height="2" fill="#8a8c9c" />
<rect x="1232" y="1042" width="1" height="1" fill="#ffffff" />
<text x="1236.45" y="1039" font-size="11.6" fill="#000" font-weight="normal" font-style="normal" textLength="40.04" lengthAdjust="spacing" >Desktop</text>
<path d="M1285 1027.5 L1288 1029.5 L1285 1031.5 M1289 1027.5 L1292 1029.5 L1289 1031.5" fill="none" stroke="#000" stroke-width="1.4"/>
<circle cx="1307" cy="1035" r="9" fill="url(#gchev)" stroke="#ffffff" stroke-width="1"/>
<path d="M1309 1030.5 L1304.5 1035 L1309 1039.5" fill="none" stroke="#ffffff" stroke-width="2.4"/>
<rect x="1324" y="1027" width="8" height="7" fill="#3a3a8a" />
<rect x="1324.5" y="1027.5" width="7" height="6" fill="none" stroke="#6a6aa8" stroke-width="1"/>
<rect x="1318" y="1032" width="8" height="7" fill="#303078" />
<rect x="1318.5" y="1032.5" width="7" height="6" fill="none" stroke="#8a8ac0" stroke-width="1"/>
<rect x="1319" y="1040" width="7" height="2" fill="#c8c8e0" />
<circle cx="1343.5" cy="1035" r="6.5" fill="#c8c8c8" stroke="#a8a8a8" stroke-width="1.2"/>
<path d="M1340 1034 Q1342 1030.5 1346 1032.5 M1347 1036 Q1345 1039.5 1341 1037.5" fill="none" stroke="#909090" stroke-width="1.2"/>
<text x="1358.62" y="1039" font-size="11.6" fill="#000" font-weight="normal" font-style="normal" textLength="27.15" lengthAdjust="spacing" >11:31</text>
</svg>
</body></html>
